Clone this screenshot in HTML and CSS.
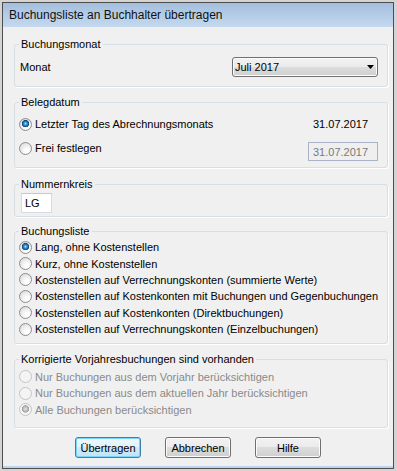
FILE: index.html
```html
<!DOCTYPE html>
<html lang="de">
<head>
    <meta charset="UTF-8">
    <meta name="viewport" content="width=device-width, initial-scale=1.0">
    <title>Buchungsliste an Buchhalter übertragen</title>
    <link rel="stylesheet" href="styles.css">
</head>
<body>
    <div class="window">
        <div class="titlebar">Buchungsliste an Buchhalter übertragen</div>

        <div class="content">
            <fieldset class="group group-month">
                <legend>Buchungsmonat</legend>
                <div class="row">
                    <span class="label">Monat</span>
                    <div class="combo">
                        <span>Juli 2017</span>
                        <svg width="7" height="4" viewBox="0 0 7 4"><polygon points="0,0 7,0 3.5,4" fill="#000"/></svg>
                    </div>
                </div>
            </fieldset>

            <fieldset class="group group-date">
                <legend>Belegdatum</legend>
                <div class="option-row">
                    <label class="option"><input type="radio" name="datum" checked>Letzter Tag des Abrechnungsmonats</label>
                    <span class="date-value">31.07.2017</span>
                </div>
                <div class="option-row">
                    <label class="option"><input type="radio" name="datum">Frei festlegen</label>
                    <input class="date-input" type="text" value="31.07.2017" disabled>
                </div>
            </fieldset>

            <fieldset class="group group-number">
                <legend>Nummernkreis</legend>
                <input class="code-input" type="text" value="LG">
            </fieldset>

            <fieldset class="group group-list">
                <legend>Buchungsliste</legend>
                <label class="choice"><input type="radio" name="liste" checked>Lang, ohne Kostenstellen</label>
                <label class="choice"><input type="radio" name="liste">Kurz, ohne Kostenstellen</label>
                <label class="choice"><input type="radio" name="liste">Kostenstellen auf Verrechnungskonten (summierte Werte)</label>
                <label class="choice"><input type="radio" name="liste">Kostenstellen auf Kostenkonten mit Buchungen und Gegenbuchungen</label>
                <label class="choice"><input type="radio" name="liste">Kostenstellen auf Kostenkonten (Direktbuchungen)</label>
                <label class="choice"><input type="radio" name="liste">Kostenstellen auf Verrechnungskonten (Einzelbuchungen)</label>
            </fieldset>

            <fieldset class="group group-korr">
                <legend>Korrigierte Vorjahresbuchungen sind vorhanden</legend>
                <label class="choice disabled"><input type="radio" name="korr" disabled>Nur Buchungen aus dem Vorjahr berücksichtigen</label>
                <label class="choice disabled"><input type="radio" name="korr" disabled>Nur Buchungen aus dem aktuellen Jahr berücksichtigen</label>
                <label class="choice disabled"><input type="radio" name="korr" checked disabled>Alle Buchungen berücksichtigen</label>
            </fieldset>

            <div class="buttons">
                <button class="default">Übertragen</button>
                <button>Abbrechen</button>
                <button>Hilfe</button>
            </div>
        </div>
    </div>
</body>
</html>
```

FILE: styles.css
```css
* {
    box-sizing: border-box;
}

body {
    margin: 0;
    background: #d4d4d4;
    font-family: "Liberation Sans", Arial, sans-serif;
    font-size: 11px;
    color: #000;
}

.window {
    margin: 2px 3px 2px 2px;
    height: 467px;
    border: 1px solid #4e4e4e;
    background: #f0f0f0;
    box-shadow: inset 0 -2px 0 #bcd4ec; /* light frame line at the bottom */
}

.titlebar {
    height: 24px;
    padding-left: 6px;
    line-height: 24px;
    font-size: 12px;
    color: #111;
    background: linear-gradient(#a3bfde, #c5d9ef);
}

.content {
    padding: 11px 5px 0 11px;
}

/* group boxes */
.group {
    margin: 0 0 9px;
    padding: 0 9px 0 4px;
    border: 1px solid #d5dfe5;
    border-radius: 3px;
    box-shadow: 1px 1px 0 #fff;
    min-width: 0;
}

.group legend {
    padding: 0 2px;
    line-height: 13px;
}

.group-month {
    padding-top: 6px;
    padding-bottom: 9px;
}

.group-date {
    padding-top: 7px;
    padding-bottom: 6px;
    margin-bottom: 10px;
}

.group-number {
    padding-top: 2px;
    padding-bottom: 3px;
    margin-bottom: 8px;
}

.group-list {
    padding-top: 1px;
    padding-bottom: 6px;
}

.group-korr {
    padding-top: 2px;
    padding-bottom: 9px;
}

.row {
    display: flex;
    align-items: center;
    height: 20px;
}

.label {
    margin-left: 1px;
}

.combo {
    margin-left: auto;
    width: 146px;
    height: 20px;
    display: flex;
    align-items: center;
    padding: 0 3px 0 2px;
    border: 1px solid #707070;
    border-radius: 3px;
    background: linear-gradient(#f2f2f2, #ebebeb 50%, #dddddd 50%, #cfcfcf);
    box-shadow: inset 0 0 0 1px #fcfcfc;
}

.combo svg {
    margin-left: auto;
}

/* radio rows */
.option-row {
    display: flex;
    align-items: flex-start;
}

.option-row + .option-row {
    margin-top: 8px;
}

.option {
    flex: 1;
    display: flex;
    align-items: center;
    height: 16px;
}

.choice {
    display: flex;
    align-items: center;
    height: 16.4px;
    white-space: nowrap;
}

.group-korr .choice {
    height: 16.6px;
}

.choice.disabled {
    color: #8a8a8a;
}

input[type="radio"] {
    appearance: none;
    -webkit-appearance: none;
    width: 13px;
    height: 13px;
    margin: 0 3px 0 0;
    flex-shrink: 0;
    border: 1px solid #8b8e91;
    border-radius: 50%;
    background: radial-gradient(circle at 65% 70%, #ffffff 15%, #e6e6e6 65%, #cdcdcd 100%);
}

input[type="radio"]:checked {
    background:
        radial-gradient(circle at 50% 42%, #bfeaff 0, #3d9fdc 1.3px, #17609c 2.8px, #163f66 3.4px, rgba(0, 0, 0, 0) 3.9px),
        radial-gradient(circle at 65% 70%, #ffffff 15%, #e6e6e6 65%, #cdcdcd 100%);
}

input[type="radio"]:disabled {
    border-color: #c4c4c4;
    background: #f4f4f4;
}

input[type="radio"]:disabled:checked {
    background:
        radial-gradient(circle at 50% 45%, #e4e4e4 0, #b8b8b8 2.4px, #9d9d9d 3.4px, rgba(0, 0, 0, 0) 3.9px),
        #f4f4f4;
}

.date-value {
    width: 70px;
    padding-left: 5px;
    line-height: 16px;
}

.date-input {
    width: 70px;
    height: 19px;
    margin: 2px 0 0;
    padding: 0 0 0 4px;
    border: 1px solid #a9b5c6;
    background: #efefef;
    color: #7a7a7a;
    font: inherit;
}

.code-input {
    display: block;
    width: 31px;
    height: 20px;
    margin-left: 2px;
    padding: 0 0 0 3px;
    border: 1px solid #d7dbe1;
    border-top-color: #c3c8cf;
    background: #fff;
    font: inherit;
    color: #000;
}

/* dialog buttons */
.buttons {
    display: flex;
    gap: 24px;
    padding-left: 61px;
}

button {
    width: 66px;
    height: 21px;
    padding: 0;
    border: 1px solid #707070;
    border-radius: 3px;
    background: linear-gradient(#f2f2f2, #ebebeb 50%, #dddddd 50%, #cfcfcf);
    box-shadow: inset 0 0 0 1px #fcfcfc;
    font: inherit;
    color: #000;
}

button.default {
    border-color: #3c7fb1;
    background: linear-gradient(#eef8fd, #e0f2fb 50%, #cfeaf8 50%, #c2e4f6);
    box-shadow: inset 0 0 0 1px #79d3f6;
}
```
